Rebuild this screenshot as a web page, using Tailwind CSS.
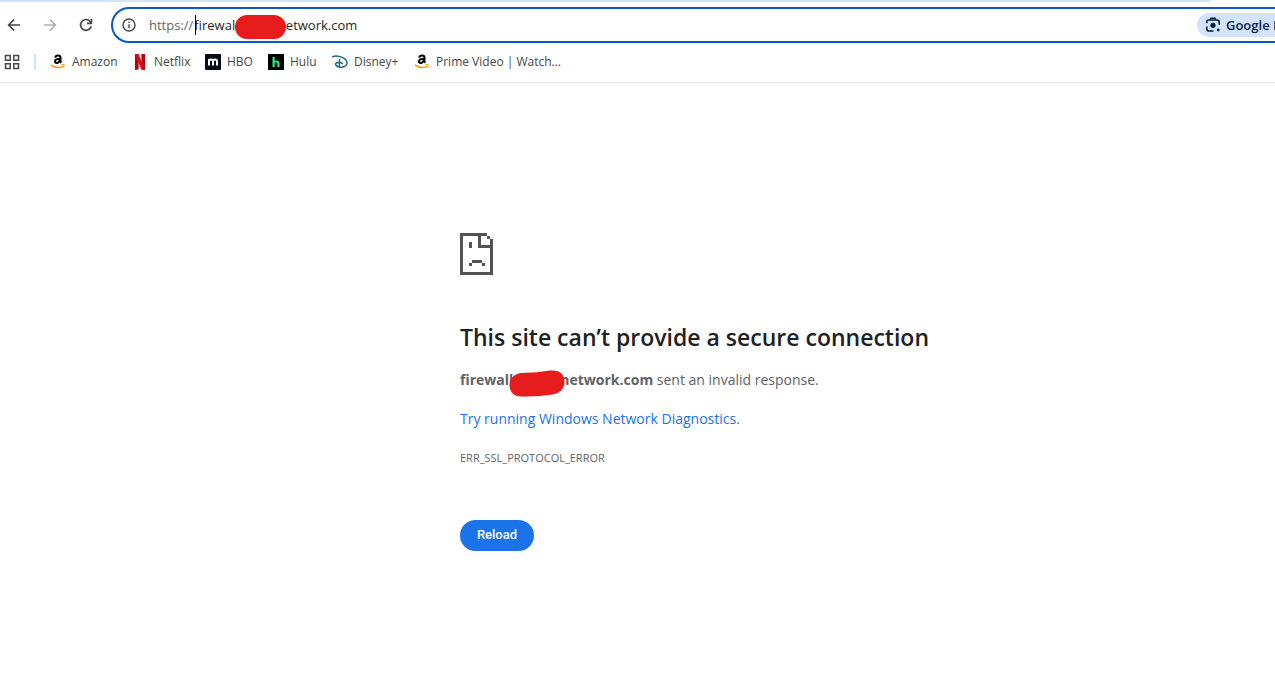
<!DOCTYPE html>
<html lang="en">
<head>
<meta charset="utf-8">
<meta name="viewport" content="width=device-width, initial-scale=1">
<title>Privacy error</title>
<script src="https://cdn.jsdelivr.net/npm/@tailwindcss/browser@4"></script>
</head>
<body class="min-h-screen overflow-x-hidden bg-white font-['Segoe_UI','Open_Sans',sans-serif] text-[#1f1f1f]">
<header class="border-b border-[#dfe1e4]">
  <div class="mr-16 h-[2px] rounded-br-lg bg-[#d3e3fd]"></div>
  <div class="flex items-center pt-[5px] pl-[6px]">
    <div class="flex shrink-0 gap-5 text-[#474747]">
      <button aria-label="Back" class="size-4"><svg viewBox="0 0 16 16" class="size-4" fill="none" stroke="currentColor" stroke-width="1.6"><path d="M14 8H3M8 2.6 2.6 8 8 13.4"/></svg></button>
      <button aria-label="Forward" class="size-4 text-[#b0b0b0]"><svg viewBox="0 0 16 16" class="size-4" fill="none" stroke="currentColor" stroke-width="1.6"><path d="M2 8h11M8 2.6 13.4 8 8 13.4"/></svg></button>
      <button aria-label="Reload page" class="size-4"><svg viewBox="0 0 16 16" class="size-4" fill="none" stroke="currentColor" stroke-width="1.7"><path d="M13.2 9.2A5.4 5.4 0 1 1 12 4.3L13.3 5.7"/><path d="M13.4 2v4.3H9"/></svg></button>
    </div>
    <div class="relative ml-[17px] flex h-9 min-w-0 flex-1 items-center rounded-l-full border-2 border-r-0 border-[#0b57d0] pl-2 text-[13px]">
      <svg viewBox="0 0 16 16" class="size-4 shrink-0" fill="none" stroke="#474747" stroke-width="1.4"><circle cx="8" cy="8" r="6"/><path d="M8 7.2v4M8 4.6v1.5"/></svg>
      <label for="url" class="ml-3 pt-px text-[#5f6368]">https://</label>
      <input id="url" type="text" spellcheck="false" class="h-8 min-w-0 flex-1 bg-transparent pl-px outline-none" value="firewal&#160;&#160;&#160;&#160;&#160;&#160;&#160;&#160;&#160;&#160;&#160;&#160;&#160;&#160;&#160;etwork.com">
      <span class="absolute top-[6px] left-[82px] h-5 w-px bg-black"></span>
      <span class="absolute top-[6px] left-[122px] h-6 w-[51px] rounded-full bg-[#e71d1d]"></span>
      <button class="flex h-6 w-[78px] shrink-0 items-center gap-[5px] overflow-hidden rounded-l-full bg-[#d3e3fd] pl-2 font-semibold whitespace-nowrap text-[#041e49]">
        <svg viewBox="0 0 16 16" class="size-4 shrink-0" fill="none" stroke="currentColor" stroke-width="1.6"><path d="M1.8 6.3V5q0-2 2-2h8.4q2 0 2 2v2.8M1.8 9.5v2.2q0 2.3 2.3 2.3h4.400"/><path d="M5.300 2.500 6 1.200h4l.7 1.300"/><circle cx="8" cy="8.300" r="2.600" fill="currentColor" stroke="none"/><circle cx="13.200" cy="13" r="1.400" fill="currentColor" stroke="none"/></svg>
        <span class="pt-px">Google Lens</span>
      </button>
    </div>
  </div>
  <nav aria-label="Bookmarks" class="flex h-[39px] items-center pb-[2px] pl-1 text-xs text-[#474747]">
    <button aria-label="Apps" class="size-4"><svg viewBox="0 0 16 16" class="size-4" fill="none" stroke="currentColor" stroke-width="1.5"><path d="M1.500 1.500h4.700v4.700H1.500zM9.800 1.500h4.700v4.700H9.800zM1.500 9.800h4.700v4.700H1.500zM9.800 9.800h4.700v4.700H9.800z"/></svg></button>
    <span class="ml-[14px] h-4 w-[2px] bg-[#d3e3fd]"></span>
    <div class="flex items-center gap-4 pl-[14px]">
      <a href="#" class="flex w-[66px] items-center gap-[6px] whitespace-nowrap"><svg viewBox="0 0 16 16" class="size-4 shrink-0" fill="none"><path d="M5.200 3.700Q5.600 1.400 8 1.400q2.500 0 2.500 2.200V7q0 1 .8 1.700M9.800 4.900Q5 4.700 5 7.300q0 1.700 1.500 1.700 2.700 0 3.300-2.700" stroke="#000" stroke-width="2"/><path d="M1 10.800q5.700 4.700 12.200 1.500" stroke="#f90" stroke-width="1.500"/><path d="M11.200 10.800q2.600-.7 3 0t-.9 2.800" stroke="#f90"/></svg>Amazon</a>
      <a href="#" class="flex w-[57px] items-center gap-[6px] whitespace-nowrap"><svg viewBox="0 0 16 16" class="size-4 shrink-0"><path d="M3 0h3.600v15.500L3 16zM9.400 0H13v16l-3.600-.5z" fill="#b1060f"/><path d="M3 0h3.600L13 16l-3.700-.5z" fill="#e50914"/></svg>Netflix</a>
      <a href="#" class="flex w-[47px] items-center gap-[6px] whitespace-nowrap"><svg viewBox="0 0 16 16" class="size-4 shrink-0" fill="none"><rect width="16" height="16" rx="1" fill="#070d1c"/><path d="M4 11.500V5M4 7.500q0-1.900 2-1.900 2 0 2 1.900v4M8 7.500q0-1.900 2-1.900 2 0 2 1.900v4" stroke="#fff" stroke-width="2"/></svg>HBO</a>
      <a href="#" class="flex w-12 items-center gap-[6px] whitespace-nowrap"><svg viewBox="0 0 16 16" class="size-4 shrink-0" fill="none"><rect width="16" height="16" fill="#000"/><path d="M5.600 3v10M5.600 9.500q0-2 2.300-2 2.500 0 2.500 2V13" stroke="#1ce783" stroke-width="2.200"/></svg>Hulu</a>
      <a href="#" class="flex w-[66px] items-center gap-[6px] whitespace-nowrap"><svg viewBox="0 0 16 16" class="size-4 shrink-0" fill="none" stroke="#1b6c80" stroke-linecap="round"><path d="M.7 2.800C3 1.300 9 2 12.500 4.600c3.600 2.700 3.300 6.300.3 7.800-2.900 1.400-6.800.8-8.400-.8C2.800 10 4 8.700 6.200 8.600c2-.1 3.800.3 4.100 1" stroke-width="1.500"/><path d="M7.600 5.500q-.7 4 0 7.800" stroke-width="1.500"/></svg>Disney+</a>
      <a href="#" class="flex items-center gap-[6px] whitespace-nowrap"><svg viewBox="0 0 16 16" class="size-4 shrink-0" fill="none"><path d="M5.200 3.700Q5.600 1.400 8 1.400q2.500 0 2.500 2.200V7q0 1 .8 1.700M9.800 4.900Q5 4.700 5 7.300q0 1.700 1.500 1.700 2.700 0 3.300-2.700" stroke="#000" stroke-width="2"/><path d="M1 10.800q5.700 4.700 12.200 1.500" stroke="#f90" stroke-width="1.500"/><path d="M11.200 10.800q2.600-.7 3 0t-.9 2.800" stroke="#f90"/></svg>Prime Video | Watch...</a>
    </div>
  </nav>
</header>
<main class="pt-[150px] pl-[460px] text-sm text-[#5f6368]">
  <svg viewBox="0 0 33 42" class="h-[42px] w-[33px]" fill="#535353" shape-rendering="crispEdges"><path d="M0 0h27v3H0zM0 0h3v42H0zM0 39h33v3H0zM30 6h3v36h-3zM18 0h3v15h-3zM18 12h15v3H18zM27 3h3v3h-3zM9 9h3v6H9zM12 27h10v3H12zM9 30h3v3H9zM22 30h3v3h-3z"/></svg>
  <h1 class="mt-[47px] text-[23px] leading-[30px] font-semibold whitespace-nowrap text-[#202124]">This site can’t provide a secure connection</h1>
  <p class="mt-4 leading-6 whitespace-nowrap"><strong class="relative font-bold">firewall<span class="inline-block w-[47px]"></span>network.com<svg viewBox="0 0 56 27" class="absolute top-0 left-[49px] h-[27px] w-14" fill="#e71d1d"><path d="M13 3Q28 3 41 .6C51-.6 56 5 55.500 12c0 7-5 11.500-12 12.500Q28 27 14 26.500C5 27 .5 22 .5 15 .5 8 6 3 13 3"/></svg></strong> sent an invalid response.</p>
  <p class="mt-[15px] leading-6"><a href="#" class="text-[#1a73e8]">Try running Windows Network Diagnostics</a>.</p>
  <p class="mt-[15px] text-[11px] leading-6">ERR_SSL_PROTOCOL_ERROR</p>
  <button class="mt-[50px] h-[31px] min-w-[74px] rounded-full bg-[#1a73e8] px-4 font-['Roboto',sans-serif] text-[13px] font-medium text-white">Reload</button>
</main>
</body>
</html>
